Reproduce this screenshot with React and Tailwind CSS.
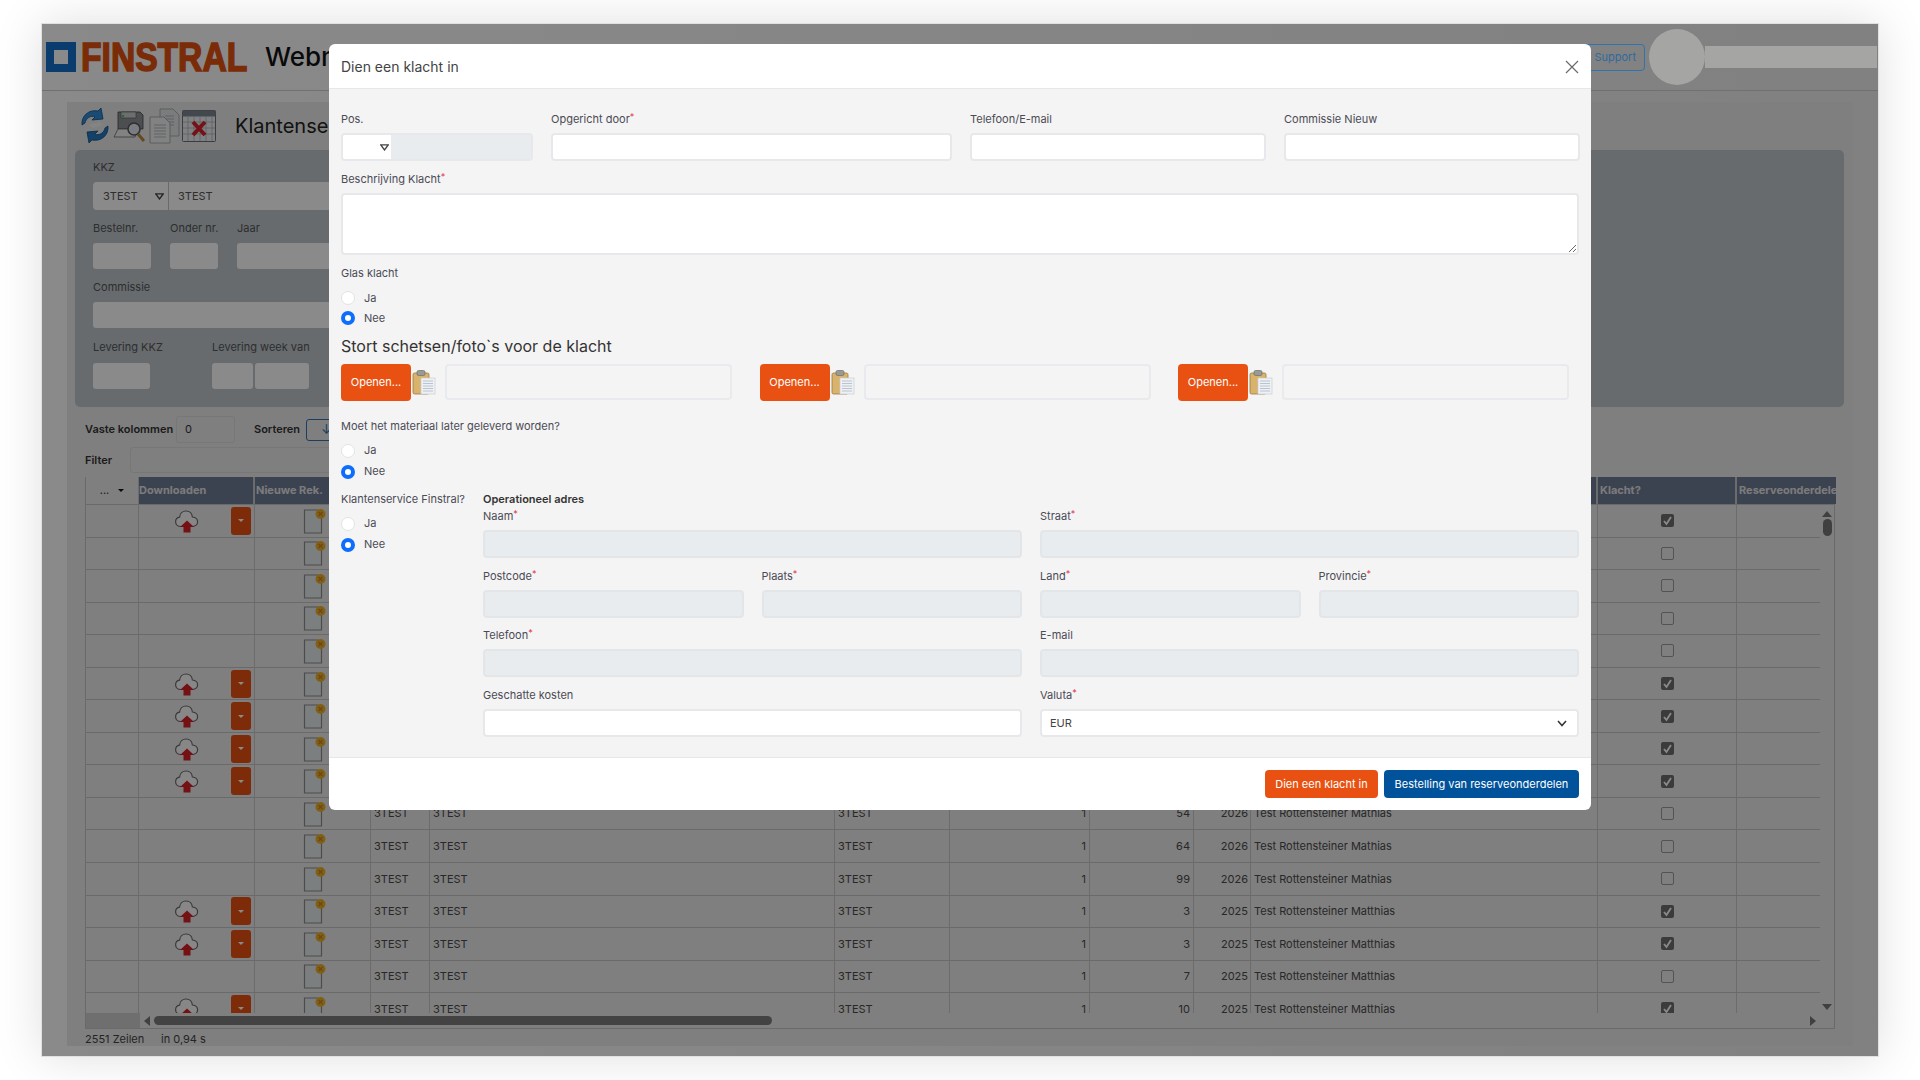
import React from "react";

const CloudIcon = () => (
  <svg width="26" height="26" viewBox="0 0 26 26">
    <path d="M7 18.5c-3.4 0-5.4-2.2-5.4-4.8 0-2.4 1.7-4.2 4-4.6C5.900 5.300 8.700 3 12 3c3.400 0 6 2.300 6.400 6 2.800.3 5.200 2 5.200 4.800 0 2.700-2.200 4.700-5.200 4.700z" fill="#fafafa" stroke="#6a6a6a" strokeWidth="1.2" />
    <path d="M13 12.500l7 6.500h-3.500v5.500h-7V19H6z" fill="#d42027" />
  </svg>
);
const DocIcon = () => (
  <svg width="24" height="26" viewBox="0 0 24 26">
    <path d="M2.500 3.500h13l4 4v19h-17z" transform="translate(0 -1.500)" fill="#e6eaed" stroke="#8c8c8c" strokeWidth="1.200" />
    <circle cx="18.500" cy="6" r="5" fill="#f2b02a" />
    <path d="M16.500 4l4 4M20.500 4l-4 4" stroke="#b98a2c" strokeWidth="1.200" />
  </svg>
);
const Tri = ({ c = "#444" }) => (
  <svg width="9" height="7" viewBox="0 0 9 7" className="shrink-0">
    <path d="M.8.900h7.400L4.500 6z" fill="none" stroke={c} strokeWidth="1.300" />
  </svg>
);
const Clipboard = () => (
  <svg width="24" height="26" viewBox="0 0 24 26" className="shrink-0">
    <rect x="1" y="4" width="16" height="21" rx="1.500" fill="#d9b26c" stroke="#9a7a3c" strokeWidth=".8" />
    <rect x="5" y="1.500" width="8" height="5" rx="1.500" fill="#9a9a94" stroke="#6e6e68" strokeWidth=".7" />
    <rect x="9" y="9" width="14" height="16" fill="#eef1f4" stroke="#c8ccd0" strokeWidth=".7" />
    <path d="M11 12h10M11 14.500h10M11 17h10M11 19.500h10M11 22h10" stroke="#aeb8c6" strokeWidth=".8" />
  </svg>
);
const RefreshIcon = () => (
  <svg width="34" height="36" viewBox="0 0 34 36">
    <path d="M4 17C3 8 11 1 20 3l3-3 2 11-11 1 3-3c-4-2-9 1-10 6z" fill="#2f8bd8" stroke="#14507f" strokeWidth=".8" />
    <path d="M30 18c1 9-7 16-16 14l-3 3-2-11 11-1-3 3c4 2 9-1 10-6z" fill="#2478c0" stroke="#14507f" strokeWidth=".8" />
    <path d="M11 17l10-3 4 3-10 3z" fill="#f2f4f6" />
  </svg>
);
const PrintIcon = () => (
  <svg width="34" height="36" viewBox="0 0 34 36">
    <path d="M5 4h22l3 3v14H5z" fill="#8d9094" stroke="#444" strokeWidth=".8" />
    <path d="M8 4h15v6H8z" fill="#c8cbce" stroke="#555" strokeWidth=".6" />
    <circle cx="10" cy="8" r="1.200" fill="#4fc04f" />
    <path d="M5 21h20l-3 8H1z" fill="#f0f0f0" stroke="#666" strokeWidth=".8" />
    <circle cx="21" cy="21" r="6" fill="#dfe8ef" stroke="#555" strokeWidth="1.500" />
    <path d="M25 26l6 7" stroke="#b98a3c" strokeWidth="3" />
  </svg>
);
const DocsIcon = () => (
  <svg width="32" height="36" viewBox="0 0 32 36">
    <path d="M11 1h13l6 6v21H11z" fill="#e4e6e8" stroke="#9a9da0" strokeWidth=".8" />
    <path d="M16 8h9M16 11h9M16 14h9M16 17h9" stroke="#a0a4a8" strokeWidth=".8" />
    <path d="M1 9h14l6 6v20H1z" fill="#f0f1f2" stroke="#9a9da0" strokeWidth=".8" />
    <path d="M5 17h12M5 20h12M5 23h12M5 26h12M5 29h12" stroke="#a0a4a8" strokeWidth=".8" />
  </svg>
);
const CalXIcon = () => (
  <svg width="34" height="32" viewBox="0 0 34 32">
    <rect x=".5" y=".5" width="33" height="31" rx="1" fill="#eceef0" stroke="#6a7078" />
    <rect x=".5" y=".5" width="33" height="6" fill="#7a8590" />
    <path d="M6 7v24M12 7v24M18 7v24M24 7v24M30 7v24M1 12h32M1 18h32M1 24h32" stroke="#a8adb3" strokeWidth=".7" />
    <path d="M11 12l12 13M23 12L11 25" stroke="#d8202c" strokeWidth="4" />
  </svg>
);
const CheckBox = ({ on }) =>
  on ? (
    <span className="w-[13px] h-[13px] rounded-[2px] bg-[#6e6e6e] flex items-center justify-center">
      <svg width="11" height="11" viewBox="0 0 11 11"><path d="M2 6l2.500 3L9 2" fill="none" stroke="#fff" strokeWidth="1.800" /></svg>
    </span>
  ) : (
    <span className="w-[13px] h-[13px] rounded-[2px] border border-[#999] bg-[#ebebeb]" />
  );

const ROWS = [
  { up: 1 }, {}, {}, {}, {}, { up: 1 }, { up: 1 }, { up: 1 }, { up: 1 },
  { n: 54, y: 2026, name: "Test Rottensteiner Mathias" },
  { n: 64, y: 2026, name: "Test Rottensteiner Mathias" },
  { n: 99, y: 2026, name: "Test Rottensteiner Mathias" },
  { up: 1, n: 3, y: 2025, name: "Test Rottensteiner Matthias" },
  { up: 1, n: 3, y: 2025, name: "Test Rottensteiner Matthias" },
  { n: 7, y: 2025, name: "Test Rottensteiner Matthias" },
  { up: 1, n: 10, y: 2025, name: "Test Rottensteiner Matthias" },
];

const cellB = "border-r border-[#c8c8c8] h-full flex items-center overflow-hidden";
const Row = ({ r }) => (
  <div className="grid grid-cols-[53px_116px_116px_59px_405px_115px_140px_104px_57px_347px_139px_84px] h-[32.550px] shrink-0 border-b border-[#c4c4c4] text-[11px] text-[#4a4a4a]">
    <div className={cellB} />
    <div className={cellB + " relative"}>
      {r.up && (
        <>
          <span className="ml-[35px] flex"><CloudIcon /></span>
          <span className="ml-[31px] w-[20px] h-[28px] rounded-[3px] bg-[#e85112] flex items-center justify-center">
            <span className="w-0 h-0 border-x-[3px] border-x-transparent border-t-[3px] border-t-white" />
          </span>
        </>
      )}
    </div>
    <div className={cellB + " pl-[47px]"}><DocIcon /></div>
    <div className={cellB + " pl-[3px]"}>{r.n ? "3TEST" : ""}</div>
    <div className={cellB + " pl-[3px]"}>{r.n ? "3TEST" : ""}</div>
    <div className={cellB + " pl-[3px]"}>{r.n ? "3TEST" : ""}</div>
    <div className={cellB + " justify-end pr-[3px]"}>{r.n ? 1 : ""}</div>
    <div className={cellB + " justify-end pr-[3px]"}>{r.n || ""}</div>
    <div className={cellB + " justify-end pr-[2px]"}>{r.y || ""}</div>
    <div className={cellB + " pl-[3px]"}>{r.name || ""}</div>
    <div className={cellB + " justify-center"}><CheckBox on={r.up} /></div>
    <div className="h-full" />
  </div>
);

const Label = ({ children, req }) => (
  <label className="block h-4 leading-4 text-[11px] text-[#4b4b55] whitespace-nowrap">
    {children}
    {req && <sup className="text-[#dc3545] text-[9px] top-[-3px]">*</sup>}
  </label>
);
const inputCls = "block w-full h-7 rounded-[4px] border-2 border-[#e6e8ec] bg-white outline-none";
const disCls = "block w-full h-7 rounded-[4px] border-2 border-[#e3e6e9] bg-[#e9ecef] outline-none";
const Field = ({ label, req, disabled }) => (
  <div>
    <Label req={req}>{label}</Label>
    <input readOnly disabled={disabled} className={(disabled ? disCls : inputCls) + " mt-[6px]"} />
  </div>
);
const Radio = ({ label, on, h = "h-[21px]" }) => (
  <div className={h + " flex items-center gap-[9px] text-[11px] text-[#4b4b55]"}>
    <input
      type="radio"
      readOnly
      checked={!!on}
      className={on ? "appearance-none w-[14px] h-[14px] rounded-full border-[4px] border-[#0d6efd] bg-white" : "appearance-none w-[14px] h-[14px] rounded-full border border-[#e3e3e3] bg-white"}
    />
    <span>{label}</span>
  </div>
);
const Upload = () => (
  <div className="w-[391px] flex items-center h-9">
    <button className="w-[70px] h-[37px] rounded-[4px] bg-[#e85112] text-white text-[11px]">Openen...</button>
    <span className="ml-[1px] flex"><Clipboard /></span>
    <input readOnly className="ml-[9px] flex-1 h-[36px] rounded-[4px] border-2 border-[#e8eaed] bg-transparent outline-none" />
  </div>
);
const FLabel = ({ children }) => <div className="h-4 leading-4 text-[11px] text-[#555] whitespace-nowrap">{children}</div>;
const FInput = ({ w }) => <div className={w + " h-[26px] rounded-[3px] bg-white"} />;

export default function App() {
  return (
    <div className="w-[1920px] h-[1080px] bg-white overflow-hidden pt-[23px] pl-[41px] font-[Inter,sans-serif]">
      <div className="relative w-[1838px] h-[1034px] bg-gradient-to-r from-white to-[#eeeeee] border border-[#e0e0e0] shadow-[0_0_45px_rgba(0,0,0,0.13)]">
        {/* header */}
        <header className="h-[67px] border-b border-[#d0d0d0] flex items-center pl-[4px]">
          <span className="w-[30px] h-[30px] border-[8px] border-[#1471cc] bg-white shrink-0" />
          <span className="ml-[5px] w-[172px] h-[40px] overflow-visible">
            <span className="block origin-left scale-x-[0.82] text-[41px] leading-[40px] font-bold text-[#e25210] whitespace-nowrap font-['Liberation_Sans',sans-serif] [-webkit-text-stroke:1.6px_#e25210]">FINSTRAL</span>
          </span>
          <span className="ml-[12px] text-[26px] font-medium text-[#111] leading-none">Webm</span>
          <div className="ml-auto flex items-center relative z-30">
            <span className="h-[27px] w-[70px] rounded-[4px] border-[1.500px] border-[#2f74b0] text-[#2f6a9c] text-[11px] flex items-center justify-end pr-[8px]">Support</span>
            <span className="ml-[4px] w-[56px] h-[56px] rounded-full bg-[#a5a5a3]" />
            <span className="w-[172px] h-[22px] bg-[#a5a5a3] mr-[1px]" />
          </div>
        </header>
        {/* main panel */}
        <main className="ml-[25px] mt-[11px] w-[1786px] h-[944px] bg-[#ebebeb]">
          <div className="h-[48px] flex items-center pl-[11px]">
            <span className="flex"><RefreshIcon /></span>
            <span className="ml-[1px] flex"><PrintIcon /></span>
            <span className="ml-[2px] flex"><DocsIcon /></span>
            <span className="ml-[1px] flex"><CalXIcon /></span>
            <span className="ml-[19px] text-[20px] text-[#222] leading-none">Klantenservice</span>
          </div>
          <section className="ml-[8px] w-[1769px] h-[257px] rounded-[5px] bg-[#bfc6cc] pl-[18px] pt-[9px] text-[#555] text-[11px]">
            <FLabel>KKZ</FLabel>
            <div className="mt-[7px] flex h-[28px] w-[700px]">
              <div className="w-[75px] rounded-l-[4px] bg-white flex items-center justify-between pl-[10px] pr-[4px]">
                <span>3TEST</span>
                <Tri />
              </div>
              <div className="ml-[1px] flex-1 bg-white flex items-center pl-[9px]">3TEST</div>
            </div>
            <div className="mt-[10px] flex">
              <div className="w-[77px]"><FLabel>Bestelnr.</FLabel><div className="mt-[7px]"><FInput w="w-[58px]" /></div></div>
              <div className="w-[67px]"><FLabel>Onder nr.</FLabel><div className="mt-[7px]"><FInput w="w-[48px]" /></div></div>
              <div><FLabel>Jaar</FLabel><div className="mt-[7px]"><FInput w="w-[120px]" /></div></div>
            </div>
            <div className="mt-[10px]"><FLabel>Commissie</FLabel><div className="mt-[7px]"><FInput w="w-[500px]" /></div></div>
            <div className="mt-[11px] flex">
              <div className="w-[119px]"><FLabel>Levering KKZ</FLabel><div className="mt-[8px]"><FInput w="w-[57px]" /></div></div>
              <div>
                <FLabel>Levering week van</FLabel>
                <div className="mt-[8px] flex gap-[2px]"><FInput w="w-[41px]" /><FInput w="w-[54px]" /></div>
              </div>
            </div>
          </section>
          <div className="mt-[9px] ml-[18px] h-[27px] flex items-center text-[11px] text-[#333]">
            <span className="font-semibold w-[91px] whitespace-nowrap">Vaste kolommen</span>
            <span className="w-[59px] h-[27px] rounded-[3px] border border-[#dcdcdc] flex items-center pl-[8px]">0</span>
            <span className="ml-[19px] font-semibold w-[52px]">Sorteren</span>
            <span className="w-[100px] h-[22px] rounded-[3px] border border-[#2f74b0] flex items-center pl-[14px] text-[#2f74b0] text-[13px]">↓</span>
          </div>
          <div className="mt-[4px] ml-[18px] h-[26px] flex items-center text-[11px] text-[#333]">
            <span className="font-semibold w-[45px]">Filter</span>
            <span className="w-[900px] h-[26px] rounded-[3px] border border-[#dcdcdc]" />
          </div>
          {/* table */}
          <div className="mt-[4px] ml-[18px] w-[1750px] border-x border-b border-[#c4c4c4]">
            <div className="grid grid-cols-[53px_116px_116px_59px_405px_115px_140px_104px_57px_347px_139px_99px] h-[28px] text-[11px] font-bold text-[#ffffff] border-b border-[#c4c4c4]">
              <div className="bg-[#ebebeb] flex items-center justify-center gap-[9px] border-r border-[#c8c8c8] text-[#333] font-normal">
                <span>...</span>
                <span className="w-0 h-0 border-x-[3px] border-x-transparent border-t-[3px] border-t-[#111]" />
              </div>
              <div className="bg-[#6f7c94] border-r-2 border-[#c8c8c8] flex items-center opacity-100 text-[#e4e4e4] whitespace-nowrap">Downloaden</div>
              <div className="bg-[#6f7c94] border-r-2 border-[#c8c8c8] flex items-center text-[#e4e4e4] pl-[1px] whitespace-nowrap">Nieuwe Rek.</div>
              <div className="bg-[#6f7c94]" /><div className="bg-[#6f7c94]" /><div className="bg-[#6f7c94]" /><div className="bg-[#6f7c94]" /><div className="bg-[#6f7c94]" /><div className="bg-[#6f7c94]" />
              <div className="bg-[#6f7c94] border-r-2 border-[#c8c8c8]" />
              <div className="bg-[#6f7c94] border-r-2 border-[#c8c8c8] flex items-center text-[#e4e4e4] pl-[2px]">Klacht?</div>
              <div className="bg-[#6f7c94] flex items-center text-[#e4e4e4] pl-[2px] overflow-hidden whitespace-nowrap">Reserveonderdelen</div>
            </div>
            <div className="flex h-[508px]">
              <div className="w-[1735px] overflow-hidden flex flex-col">
                {ROWS.map((r, i) => <Row key={i} r={r} />)}
              </div>
              <div className="w-[14px] flex flex-col items-center pt-[6px] pb-[3px] bg-[#ebebeb]">
                <span className="w-0 h-0 border-x-[5px] border-x-transparent border-b-[6px] border-b-[#777]" />
                <span className="mt-[2px] w-[9px] h-[17px] rounded-full bg-[#777]" />
                <span className="mt-auto w-0 h-0 border-x-[5px] border-x-transparent border-t-[6px] border-t-[#777]" />
              </div>
            </div>
            <div className="h-[15px] flex items-center">
              <span className="w-[54px] h-full bg-[#cdcdcd]" />
              <span className="ml-[4px] w-0 h-0 border-y-[5px] border-y-transparent border-r-[6px] border-r-[#777]" />
              <span className="ml-[4px] w-[618px] h-[9px] rounded-full bg-[#7c7c7c]" />
              <span className="ml-auto mr-[18px] w-0 h-0 border-y-[5px] border-y-transparent border-l-[6px] border-l-[#777]" />
            </div>
          </div>
          <div className="ml-[18px] mt-[2px] h-[16px] flex items-center text-[11px] text-[#444]">
            <span className="w-[76px]">2551 Zeilen</span>
            <span>in 0,94 s</span>
          </div>
        </main>
        {/* backdrop */}
        <div className="absolute inset-0 bg-black/[.46] z-20" />
        {/* modal */}
        <div className="absolute left-[287px] top-[20px] z-40 w-[1262px] h-[766px] rounded-[6px] bg-white flex flex-col overflow-hidden">
          <div className="h-[45px] shrink-0 border-b border-[#e5e7eb] flex items-center justify-between pl-[12px] pr-[12px]">
            <span className="text-[14px] text-[#444]">Dien een klacht in</span>
            <svg width="14" height="14" viewBox="0 0 14 14" className="mt-[2px]"><path d="M1 1l12 12M13 1L1 13" stroke="#6b6b6b" strokeWidth="1.200" /></svg>
          </div>
          <div className="h-[669px] shrink-0 bg-[#f4f4f4] px-[12px] pt-[22px] border-b border-[#e5e7eb]">
            <div className="grid grid-cols-[192px_401px_296px_296px] gap-x-[18px]">
              <div>
                <Label>Pos.</Label>
                <div className="mt-[6px] flex h-7 rounded-[4px] border-2 border-[#e6e8ec] overflow-hidden">
                  <div className="w-[48px] bg-white flex items-center justify-end pr-[2px]"><Tri /></div>
                  <div className="flex-1 bg-[#e9ecef]" />
                </div>
              </div>
              <Field label="Opgericht door" req />
              <Field label="Telefoon/E-mail" />
              <Field label="Commissie Nieuw" />
            </div>
            <div className="mt-[10px]">
              <Label req>Beschrijving Klacht</Label>
              <textarea readOnly className="mt-[6px] block w-full h-[62px] rounded-[4px] border-2 border-[#e6e8ec] bg-white outline-none" />
            </div>
            <div className="mt-[10px]"><Label>Glas klacht</Label></div>
            <div className="mt-[7px]">
              <Radio label="Ja" h="h-[20px]" />
              <Radio label="Nee" on h="h-[20px]" />
            </div>
            <h2 className="mt-[6px] h-6 leading-6 text-[16px] font-normal text-[#333]">Stort schetsen/foto`s voor de klacht</h2>
            <div className="mt-[6px] flex gap-[27.500px]">
              <Upload /><Upload /><Upload />
            </div>
            <div className="mt-[18px]"><Label>Moet het materiaal later geleverd worden?</Label></div>
            <div className="mt-[6px]">
              <Radio label="Ja" />
              <Radio label="Nee" on />
            </div>
            <div className="mt-[9px] grid grid-cols-[142px_1096px]">
              <div>
                <Label>Klantenservice Finstral?</Label>
                <div className="mt-[6px]">
                  <Radio label="Ja" />
                  <Radio label="Nee" on />
                </div>
              </div>
              <div>
                <div className="h-4 leading-4 text-[11px] font-semibold text-[#333]">Operationeel adres</div>
                <div className="mt-[1px] grid grid-cols-4 gap-x-[18px]">
                  <div className="col-span-2"><Field label="Naam" req disabled /></div>
                  <div className="col-span-2"><Field label="Straat" req disabled /></div>
                  <div className="mt-[10px]"><Field label="Postcode" req disabled /></div>
                  <div className="mt-[10px]"><Field label="Plaats" req disabled /></div>
                  <div className="mt-[10px]"><Field label="Land" req disabled /></div>
                  <div className="mt-[10px]"><Field label="Provincie" req disabled /></div>
                  <div className="col-span-2 mt-[9px]"><Field label="Telefoon" req disabled /></div>
                  <div className="col-span-2 mt-[9px]"><Field label="E-mail" disabled /></div>
                  <div className="col-span-2 mt-[10px]"><Field label="Geschatte kosten" /></div>
                  <div className="col-span-2 mt-[10px]">
                    <Label req>Valuta</Label>
                    <div className="mt-[6px] h-7 rounded-[4px] border-2 border-[#e6e8ec] bg-white flex items-center justify-between pl-[8px] pr-[10px] text-[11px] text-[#444]">
                      <span>EUR</span>
                      <svg width="10" height="7" viewBox="0 0 10 7"><path d="M1 1l4 4.500L9 1" fill="none" stroke="#333" strokeWidth="1.500" /></svg>
                    </div>
                  </div>
                </div>
              </div>
            </div>
          </div>
          <div className="flex-1 flex items-center justify-end gap-[6px] pr-[12px]">
            <button className="h-[28px] w-[113px] rounded-[4px] bg-[#e85112] text-white text-[11px]">Dien een klacht in</button>
            <button className="h-[28px] w-[195px] rounded-[4px] bg-[#00529b] text-white text-[11px]">Bestelling van reserveonderdelen</button>
          </div>
        </div>
      </div>
    </div>
  );
}
